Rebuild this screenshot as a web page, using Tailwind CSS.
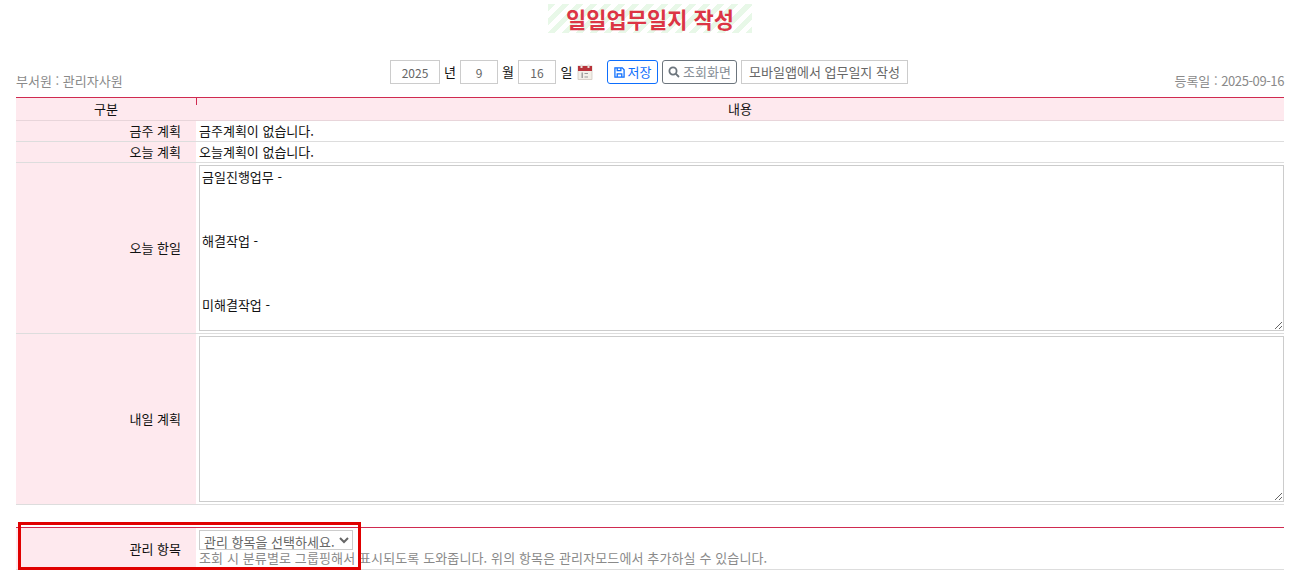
<!DOCTYPE html>
<html lang="ko">
  <head>
    <meta charset="UTF-8" />
    <title>일일업무일지 작성</title>
    <script src="https://cdn.jsdelivr.net/npm/@tailwindcss/browser@4"></script>
  </head>
  <body class="relative h-[580px] overflow-hidden bg-white pl-4 pr-[9px] font-['Noto_Sans_CJK_KR','Noto_Sans',sans-serif] text-[13px] text-[#111]">
    <div class="flex justify-center pt-1">
      <h1 class="flex h-[29px] w-[204px] items-center justify-center bg-[repeating-linear-gradient(135deg,#e8f8e8_0,#e8f8e8_5px,#ffffff_5px,#ffffff_10px)] text-[22px] font-bold text-[#dc3545]">일일업무일지 작성</h1>
    </div>

    <div class="mt-[27px] grid h-[37px] grid-cols-[1fr_auto_1fr] text-[#8a8a8a]">
      <div class="self-end pb-2 leading-4">부서원 : 관리자사원</div>
      <div class="mr-[2px] flex h-6 items-center text-[#111]">
        <input value="2025" class="h-6 w-[50px] border border-[#ccc] text-center text-[12px] text-[#666]" />
        <span class="w-[20px] text-center">년</span>
        <input value="9" class="h-6 w-[38px] border border-[#ccc] text-center text-[12px] text-[#666]" />
        <span class="w-[20px] text-center">월</span>
        <input value="16" class="h-6 w-[38px] border border-[#ccc] text-center text-[12px] text-[#666]" />
        <span class="w-[21px] text-center">일</span>
        <svg class="h-4 w-4" viewBox="0 0 16 16">
          <rect x="1" y="2" width="14" height="13.5" fill="#f3efe8" stroke="#c4b8b0" stroke-width="0.6" />
          <rect x="1" y="2" width="14" height="5" fill="#b8323a" />
          <rect x="3.5" y="0.5" width="2" height="3.5" fill="#e8e0dc" />
          <rect x="10.5" y="0.5" width="2" height="3.5" fill="#e8e0dc" />
          <path d="M4.5 8.5h1.4v5.5H4.5zM7.5 9h3.5v1H7.5zM7.5 12.5h3.5v1H7.5z" fill="#9a9a9a" />
        </svg>
        <button class="ml-[14px] flex h-6 w-[51px] items-center justify-center gap-[3px] rounded-[3px] border border-[#0d6efd] text-[#0d6efd]">
          <svg class="h-[11px] w-[11px]" viewBox="0 0 12 12" fill="none" stroke="currentColor" stroke-width="1.4">
            <path d="M1 1h8l2 2v8H1z" />
            <path d="M3.5 1v3h4V1M3.5 11V7.5h5V11" />
          </svg>
          저장
        </button>
        <button class="ml-1 flex h-6 w-[75px] items-center justify-center gap-[3px] rounded-[3px] border border-[#6c757d] text-[#868e96]">
          <svg class="h-3 w-3 text-[#6c757d]" viewBox="0 0 12 12" fill="none" stroke="currentColor" stroke-width="1.8">
            <circle cx="5" cy="5" r="3.6" />
            <path d="M7.7 7.7L11 11" />
          </svg>
          조회화면
        </button>
        <button class="ml-1 h-6 w-[167px] border border-[#ccc] text-[#666]">모바일앱에서 업무일지 작성</button>
      </div>
      <div class="self-end pb-2 text-right leading-4">등록일 : <span class="tracking-[-0.4px]">2025-09-16</span></div>
    </div>

    <div class="h-px bg-[#d02a50]"></div>
    <div class="grid grid-cols-[180px_1fr]">
      <div class="flex h-[23px] items-center justify-center border-b border-[#e8d5da] bg-[#fee9ee]">구분</div>
      <div class="relative flex h-[23px] items-center justify-center border-b border-[#e8d5da] bg-[#fee9ee] before:absolute before:left-0 before:top-0 before:h-[7px] before:w-px before:bg-[#d02a50]">내용</div>

      <div class="flex h-[21px] items-center justify-end border-b border-[#ddd] bg-[#fee9ee] pr-[15px]">금주 계획</div>
      <div class="flex h-[21px] items-center border-b border-[#ddd] pl-[3px]">금주계획이 없습니다.</div>

      <div class="flex h-[21px] items-center justify-end border-b border-[#ddd] bg-[#fee9ee] pr-[15px]">오늘 계획</div>
      <div class="flex h-[21px] items-center border-b border-[#ddd] pl-[3px]">오늘계획이 없습니다.</div>

      <div class="flex h-[171px] items-center justify-end border-b border-[#ddd] bg-[#fee9ee] pr-[15px]">오늘 한일</div>
      <div class="flex h-[171px] items-center border-b border-[#ddd] pl-[3px]">
        <textarea class="block h-[166px] w-full border border-[#ccc] px-[2px] py-0 leading-[21.33px]">금일진행업무 -


해결작업 -


미해결작업 -</textarea>
      </div>

      <div class="flex h-[171px] items-center justify-end border-b border-[#ddd] bg-[#fee9ee] pr-[15px]">내일 계획</div>
      <div class="flex h-[171px] items-center border-b border-[#ddd] pl-[3px]">
        <textarea class="block h-[166px] w-full border border-[#ccc] px-[2px] py-0"></textarea>
      </div>
    </div>

    <div class="mt-[22px] h-px bg-[#d02a50]"></div>
    <div class="grid grid-cols-[180px_1fr] border-b border-[#ddd]">
      <div class="flex h-[41px] items-center justify-end bg-[#fee9ee] pr-[15px]">관리 항목</div>
      <div class="h-[41px] pl-[3px] pt-[2px]">
        <select class="block h-[20px] w-[154px] border border-[#ccc] leading-4 text-[#666]">
          <option>관리 항목을 선택하세요.</option>
        </select>
        <p class="leading-[15px] tracking-[0.12px] text-[#8a8a8a]">조회 시 분류별로 그룹핑해서 표시되도록 도와줍니다. 위의 항목은 관리자모드에서 추가하실 수 있습니다.</p>
      </div>
    </div>

    <div class="absolute left-[18px] top-[522px] h-[48px] w-[343px] border-[3px] border-[#e00000]"></div>
  </body>
</html>
